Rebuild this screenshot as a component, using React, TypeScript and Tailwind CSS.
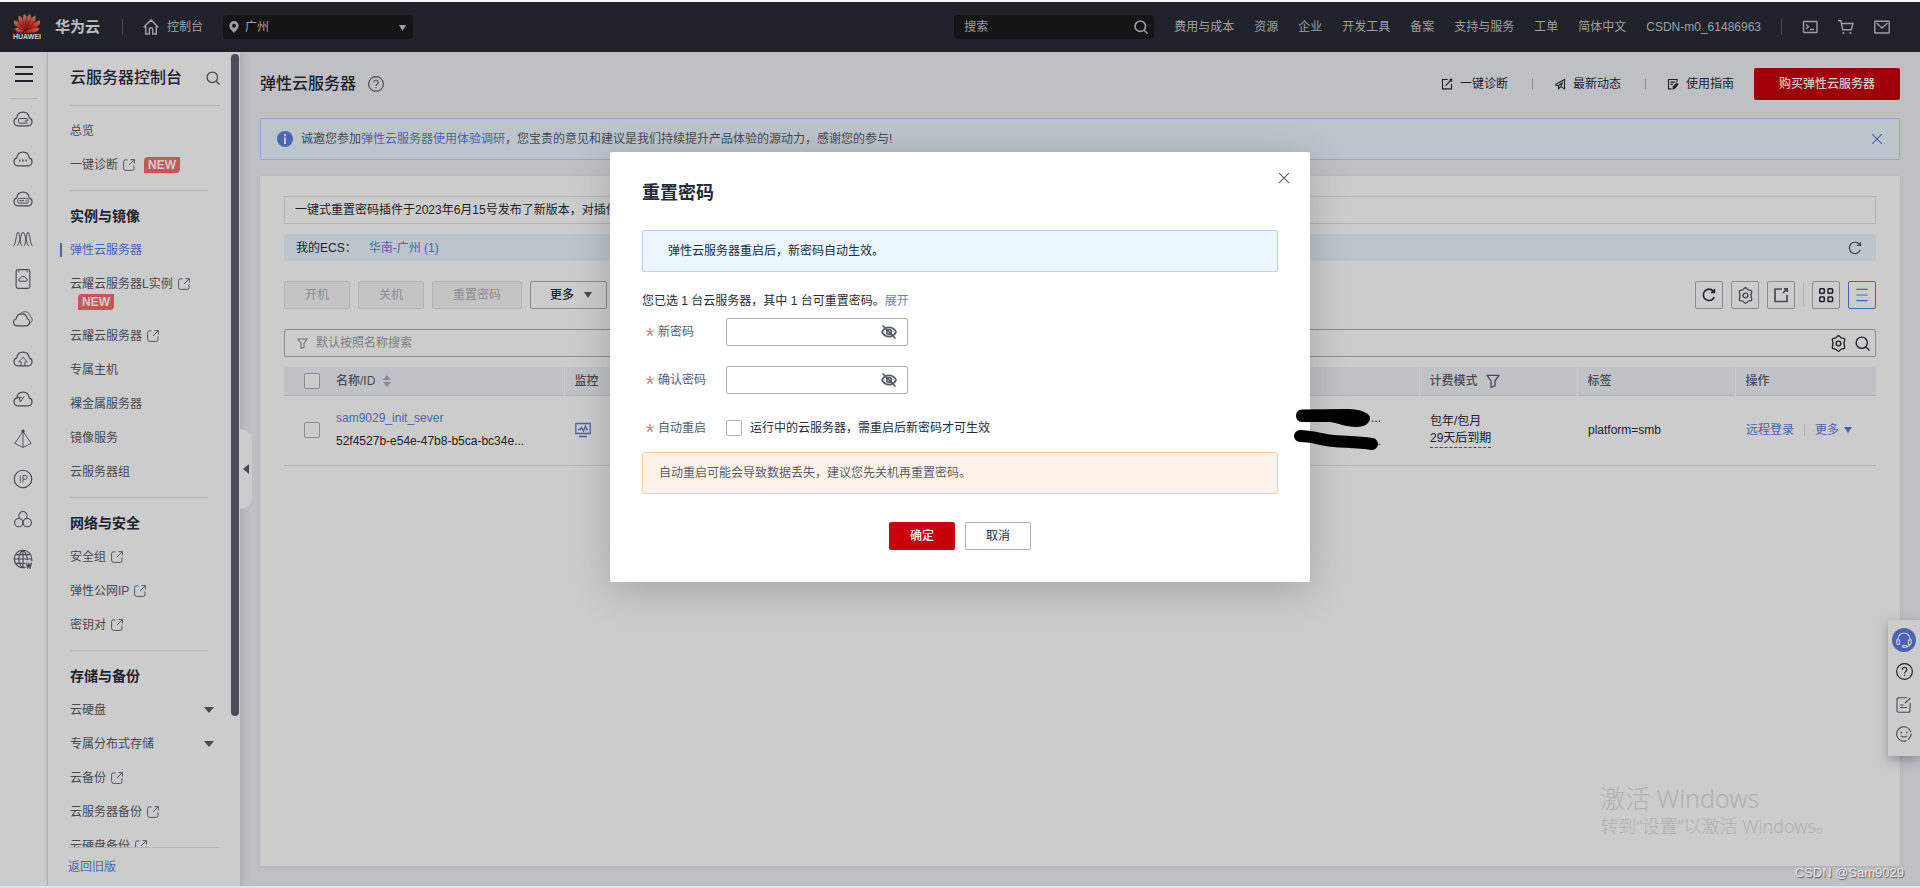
import type { ReactNode } from 'react';

interface IconProps {
  className: string;
  width?: number;
  children: ReactNode;
}

function Icon({ className, width = 1.2, children }: IconProps) {
  return (
    <svg viewBox="0 0 16 16" className={`shrink-0 ${className}`} fill="none" stroke="currentColor" strokeWidth={width} aria-hidden="true">
      {children}
    </svg>
  );
}

const ExternalIcon = () => (
  <Icon className="h-3 w-3" width={1.2}>
    <path d="M6 1.2H3A2.2 2.2 0 0 0 .8 3.4v9a2.8 2.8 0 0 0 2.8 2.8h8.8a2.2 2.2 0 0 0 2.2-2.2V8.5M8 8l7-7M10 .8h5.2V6" />
  </Icon>
);

const SearchIcon = ({ className, width = 1.3 }: { className: string; width?: number }) => (
  <Icon className={className} width={width}>
    <circle cx="7.2" cy="7.2" r="6" />
    <path d="m11.5 11.5 4 4" />
  </Icon>
);

const RefreshIcon = ({ className, width = 1.5 }: { className: string; width?: number }) => (
  <Icon className={className} width={width}>
    <path d="M14 10.4A6.5 6.5 0 1 1 12.8 3.4l1 1.2M14.2 1v4h-4" />
  </Icon>
);

const GearIcon = ({ className }: { className: string }) => (
  <Icon className={className} width={1.3}>
    <path d="M8 .7c1.1 0 1.6 1.4 2.5 1.9 1 .5 2.6.1 3.2 1.1.6 1-.5 2.100-.5 4.300s1.100 3.300.5 4.300c-.6 1-2.200.6-3.200 1.100-.9.5-1.400 1.900-2.500 1.900s-1.600-1.400-2.500-1.900c-1-.5-2.600-.1-3.200-1.100-.6-1 .5-2.100.5-4.300s-1.100-3.300-.5-4.300c.6-1 2.200-.6 3.200-1.100C6.400 2.100 6.900.7 8 .7z" />
    <circle cx="8" cy="8" r="2.200" />
  </Icon>
);

const FilterIcon = ({ className }: { className: string }) => (
  <Icon className={className} width={1.5}>
    <path d="M1.2 1.500h13.600L10.200 8v5.500l-4.400 1.700V8z" />
  </Icon>
);

const CloseIcon = ({ className, width = 1.5 }: { className: string; width?: number }) => (
  <Icon className={className} width={width}>
    <path d="m1.5 1.5 13 13M14.5 1.5l-13 13" />
  </Icon>
);

const HelpIcon = ({ className }: { className: string }) => (
  <Icon className={className} width={1.1}>
    <circle cx="8" cy="8" r="7.4" />
    <path d="M5.800 6.300A2.200 2.200 0 1 1 9.300 8C8.500 8.600 8 8.900 8 9.900M8 11v1.300" />
  </Icon>
);

const CaretDown = ({ className }: { className: string }) => (
  <svg viewBox="0 0 10 6" preserveAspectRatio="none" className={`shrink-0 ${className}`} fill="currentColor" aria-hidden="true">
    <path d="M0 0h10L5 6z" />
  </svg>
);

const EyeOffIcon = () => (
  <Icon className="h-4 w-4" width={1.7}>
    <path d="M1 8c1.600-3 4.200-4.600 7-4.600S13.400 5 15 8c-1.600 3-4.200 4.600-7 4.600S2.600 11 1 8z" />
    <circle cx="8" cy="8" r="2.300" />
    <path d="m1.500 1.500 13 13" />
  </Icon>
);

const CLOUD = 'M3.800 13.500h8.400a3.300 3.300 0 0 0 .8-6.400C12.600 4.200 10.600 2.500 8 2.500S3.400 4.200 3 7.100a3.300 3.300 0 0 0 .8 6.400z';

const RAIL_ICONS: { name: string; shape: ReactNode }[] = [
  { name: '弹性云服务器', shape: <><path d={CLOUD} /><path d="M11.800 11.300H5.500a1.200 1.200 0 0 1-1.200-1.200V8.800a1.200 1.200 0 0 1 1.200-1.200h5a1.200 1.200 0 0 1 1.200 1.200v.8H9.200" strokeWidth=".8" /></> },
  { name: '云耀云服务器', shape: <><path d={CLOUD} /><path d="M4.800 9.200H6M7.400 9.200h1.200M10 9.200h1.200" strokeWidth="1.500" /></> },
  { name: '裸金属服务器', shape: <><path d={CLOUD} /><rect x="3.800" y="7.500" width="8.400" height="3.800" rx="1" strokeWidth=".7" /><path d="M5 9.400h3.800M9.800 9.400h1.200" /></> },
  { name: '弹性伸缩', shape: <path d="M.3 13.500C2.200 13.500 2.600 2.500 4 2.500s1.800 11 3.300 11M3.300 13.500c1.500 0 3.200-11 4.700-11s3.200 11 4.700 11M8.700 13.500c1.500 0 1.900-11 3.300-11s1.800 11 3.700 11" strokeWidth=".8" /> },
  { name: '专属主机', shape: <><rect x="2.500" y=".5" width="11" height="15" rx="1.500" /><path d="M4 2.200h1.200M10.800 2.200H12M5.600 9.800h4.800a1 1 0 0 0 .2-2C10.200 6.700 9.200 6 8 6s-2.200.7-2.600 1.800a1 1 0 0 0 .2 2z" strokeWidth=".8" /></> },
  { name: '云备份', shape: <><path d="M3.300 13.500h7.500a3 3 0 0 0 .7-5.700C11 5.300 9.200 3.900 7 3.900S3 5.300 2.600 7.800a2.900 2.900 0 0 0 .7 5.700z" /><path d="M6 3.700C7 2.700 8.300 2.200 9.700 2.200c2.300 0 3.800 1.500 4.200 3.800a3 3 0 0 1-.2 5.300" strokeWidth=".7" /></> },
  { name: '云迁移', shape: <><path d={CLOUD} /><path d="M6.500 13.500v-3.200H4.600L8 6.500l3.400 3.800H9.500v3.200" strokeWidth=".7" /></> },
  { name: '云监控', shape: <><path d={CLOUD} /><path d="M3 7.100c1.400-.4 3-.3 4-.3M4.800 6l1 4.500L9 5.800" strokeWidth=".8" /></> },
  { name: '负载均衡', shape: <><path d="M8 1.800 1.500 11.500 8 14.800l6.500-3.300zM8 2v12.500" strokeWidth=".7" /><circle cx="8" cy="1.800" r=".9" fill="currentColor" /></> },
  { name: '弹性公网IP', shape: <><circle cx="8" cy="8" r="7" strokeWidth=".9" /><path d="M5.800 5.200v5.600M8 10.800V5.200h1.700a1.500 1.500 0 0 1 0 3.100H8" strokeWidth=".7" /></> },
  { name: '安全组', shape: <><path d="M5.600 7.700a3.300 3.300 0 1 1 4.800 0" strokeWidth=".9" /><circle cx="4.600" cy="10.900" r="3.300" strokeWidth=".9" /><circle cx="11.400" cy="10.900" r="3.300" strokeWidth=".9" /></> },
  { name: '域名', shape: <><path d="M10 14.700A7 7 0 1 1 15 8.500v1.200M8 15c-4.500-3-4.500-11 0-14 2.300 1.800 3.500 4.600 3.500 8M8 1v14M1 8h14M2.200 4.500h11.600M2.200 11.500h7.500" /><path d="m10.700 11 1 4 1-3 1 3 1-4" strokeWidth="1.100" /></> },
];

interface MenuItem {
  label: string;
  external?: boolean;
  isNew?: boolean;
  badgeBelow?: boolean;
  active?: boolean;
  expandable?: boolean;
}

const MENU: { title?: string; items: MenuItem[] }[] = [
  { items: [{ label: '总览' }, { label: '一键诊断', external: true, isNew: true }] },
  {
    title: '实例与镜像',
    items: [
      { label: '弹性云服务器', active: true },
      { label: '云耀云服务器L实例', external: true, isNew: true, badgeBelow: true },
      { label: '云耀云服务器', external: true },
      { label: '专属主机' },
      { label: '裸金属服务器' },
      { label: '镜像服务' },
      { label: '云服务器组' },
    ],
  },
  {
    title: '网络与安全',
    items: [
      { label: '安全组', external: true },
      { label: '弹性公网IP', external: true },
      { label: '密钥对', external: true },
    ],
  },
  {
    title: '存储与备份',
    items: [
      { label: '云硬盘', expandable: true },
      { label: '专属分布式存储', expandable: true },
      { label: '云备份', external: true },
      { label: '云服务器备份', external: true },
      { label: '云硬盘备份', external: true },
    ],
  },
];

const NAV = ['费用与成本', '资源', '企业', '开发工具', '备案', '支持与服务', '工单', '简体中文'];

const PETALS = [-78, -52, -28, -9, 9, 28, 52, 78];

function Logo() {
  return (
    <a href="#" className="flex w-[26px] flex-col items-center text-white">
      <svg viewBox="0 0 26 20" className="h-5 w-[26px]" aria-hidden="true">
        <defs>
          <linearGradient id="petal" x1="0" y1="0" x2="0" y2="1">
            <stop offset="0" stopColor="#f5957c" />
            <stop offset=".5" stopColor="#ea3a28" />
            <stop offset="1" stopColor="#d0101a" />
          </linearGradient>
        </defs>
        {PETALS.map((angle) => (
          <path
            key={angle}
            d="M13 18.500C10.500 13 9.700 7 11 3.500c.6-1.600 1.300-2.500 2-2.800.7.300 1.400 1.200 2 2.800 1.300 3.500.5 9.500-2 15z"
            fill="url(#petal)"
            stroke="#272b33"
            strokeWidth=".5"
            transform={`rotate(${angle} 13 18.500) translate(0 ${Math.abs(angle) > 60 ? 5 : 0})`}
          />
        ))}
      </svg>
      <span className="text-[7px] leading-[8px] font-bold">HUAWEI</span>
    </a>
  );
}

function Header() {
  return (
    <header className="flex h-[50px] shrink-0 items-center bg-[#272b33] pr-[30px] pl-[14px] text-[#c4c6cb]">
      <Logo />
      <a href="#" className="ml-[15px] text-[15px] font-bold text-[#eeeeee]">华为云</a>
      <span className="ml-[22px] h-4 w-px bg-[#5a5d64]" />
      <a href="#" className="ml-5 flex items-center gap-2">
        <Icon className="h-4 w-4" width={1.5}>
          <path d="M.7 8.200 8 1l7.300 7.200M2.700 7v8h3.600v-4.500a1.700 1.700 0 0 1 3.400 0V15h3.600V7" />
        </Icon>
        控制台
      </a>
      <div className="relative ml-5 w-[190px]">
        <svg viewBox="0 0 10 12" className="absolute top-[6px] left-[6px] h-3 w-[10px]" fill="currentColor" aria-hidden="true">
          <path fillRule="evenodd" d="M5 0a4.700 4.700 0 0 0-4.700 4.700C.3 7.600 3 9.500 5 12c2-2.500 4.700-4.400 4.700-7.300A4.700 4.700 0 0 0 5 0zm0 6.700a2 2 0 1 1 0-4 2 2 0 0 1 0 4z" />
        </svg>
        <select aria-label="区域" className="h-6 w-full appearance-none rounded-sm bg-[#191919] pl-[22px]">
          <option>广州</option>
        </select>
        <CaretDown className="pointer-events-none absolute top-[10px] right-[7px] h-[6px] w-[7px]" />
      </div>
      <div className="ml-auto flex h-6 w-[200px] items-center rounded-sm bg-[#191919] pr-[6px] pl-[10px]">
        <input aria-label="搜索" placeholder="搜索" className="min-w-0 flex-1 placeholder:text-[#c4c6cb]" />
        <SearchIcon className="h-[14px] w-[14px]" width={1.8} />
      </div>
      <nav className="ml-5 flex items-center gap-5">
        {NAV.map((item) => (
          <a key={item} href="#">{item}</a>
        ))}
        <a href="#">CSDN-m0_61486963</a>
      </nav>
      <span className="ml-5 h-4 w-px bg-[#5a5d64]" />
      <div className="ml-5 flex items-center gap-5">
        <button aria-label="CloudShell">
          <Icon className="h-4 w-4" width={1.4}>
            <rect x="1.500" y="2.500" width="13.500" height="11" rx=".5" />
            <path d="m4 5.500 2.500 2.300L4 10M8 10.500h4" />
          </Icon>
        </button>
        <button aria-label="购物车">
          <Icon className="h-4 w-4" width={1.4}>
            <path d="M0 1.800h2.800l2 9h8.400L15 4.500H3.500" />
            <path d="M4.500 13.800h1.800M11.500 13.800h1.800" strokeWidth="1.800" />
          </Icon>
        </button>
        <button aria-label="消息">
          <Icon className="h-4 w-4" width={1.4}>
            <rect x=".8" y="2.200" width="14.400" height="11.800" rx=".5" />
            <path d="m2.500 4 5.500 5 5.500-5" />
          </Icon>
        </button>
      </div>
    </header>
  );
}

function NewBadge() {
  return (
    <span className="flex h-4 w-9 items-center justify-center rounded-tl-[4px] rounded-br-[4px] bg-[#f66f6a] font-bold text-white">NEW</span>
  );
}

function Sidebar() {
  return (
    <>
      <div className="flex w-12 shrink-0 flex-col items-center overflow-hidden border-r border-[#dfe1e6] bg-white text-[#575d6c]">
        <button aria-label="菜单" className="mt-[14px] flex h-4 w-[18px] flex-col justify-between">
          <span className="h-[2px] w-full bg-[#252b3a]" />
          <span className="h-[2px] w-full bg-[#252b3a]" />
          <span className="h-[2px] w-full bg-[#252b3a]" />
        </button>
        <span className="mt-4 h-px w-[27px] bg-[#dfe1e6]" />
        {RAIL_ICONS.map(({ name, shape }) => (
          <a key={name} href="#" aria-label={name} className="flex h-10 items-center pr-px">
            <Icon className="h-5 w-5" width={0.9}>{shape}</Icon>
          </a>
        ))}
      </div>
      <aside className="relative z-10 flex w-48 shrink-0 bg-white shadow-[2px_0_8px_rgba(37,43,58,0.15)]">
        <div className="flex min-w-0 flex-1 flex-col pl-[22px]">
          <div className="mr-[11px] flex h-[54px] shrink-0 items-center justify-between border-b border-[#dfe1e6] pb-[2px] text-[#252b3a]">
            <h1 className="text-base font-medium">云服务器控制台</h1>
            <button aria-label="搜索菜单" className="text-[#575d6c]"><SearchIcon className="h-[14px] w-[14px]" width={1.5} /></button>
          </div>
          <nav className="-ml-[22px] min-h-0 flex-1 overflow-hidden pt-2 pl-[22px] text-[#575d6c]">
            {MENU.map((group, i) => (
              <section key={i} className={i > 0 ? 'mt-2 mr-[23px] border-t border-[#dfe1e6] pt-2' : ''}>
                {group.title && <h2 className="flex h-[34px] items-center text-sm font-bold text-[#252b3a]">{group.title}</h2>}
                {group.items.map((item) => (
                  <div key={item.label}>
                    <a href="#" className={`relative flex h-[34px] items-center gap-[5px] whitespace-nowrap ${item.active ? 'text-[#5e7ce0]' : ''}`}>
                      {item.active && <span className="absolute -left-[10px] h-[14px] w-[2px] bg-[#5e7ce0]" />}
                      {item.label}
                      {item.external && <ExternalIcon />}
                      {item.isNew && !item.badgeBelow && <span className="ml-1"><NewBadge /></span>}
                      {item.expandable && <CaretDown className="absolute -right-[6px] h-[6px] w-[10px]" />}
                    </a>
                    {item.badgeBelow && <div className="-mt-[7px] flex h-[25px] pl-2"><NewBadge /></div>}
                  </div>
                ))}
              </section>
            ))}
          </nav>
          <div className="mr-3 -ml-[2px] flex h-[39px] shrink-0 items-center border-t border-[#dfe1e6]">
            <a href="#" className="text-[#5e7ce0]">返回旧版</a>
          </div>
        </div>
        <div className="mt-[2px] mr-px h-[662px] w-2 rounded-full bg-[#5d6070]" />
        <button aria-label="收起" className="absolute top-[377px] left-full flex h-20 w-3 items-center justify-center rounded-r-xl bg-white text-[#575d6c]">
          <CaretDown className="h-[6px] w-[10px] rotate-90" />
        </button>
      </aside>
    </>
  );
}

const QUICK_LINKS: { label: string; icon: ReactNode }[] = [
  { label: '一键诊断', icon: <><path d="M9 2H2v12.500h12V8M6 10.500l7-7.500" /><path d="M11.500 2H14v3" strokeWidth="2" /></> },
  { label: '最新动态', icon: <path d="M1.500 9 14 2v12.500l-5-3-3 2.800V10.500l5.500-4.500M1.500 9l4.500 1.500M9 11.500l2.500-5.500" /> },
  { label: '使用指南', icon: <><path d="M13.500 5V2H2v12.500h4M4.500 5.500h7M4.500 8.500h3.500" /><path d="m8 14.500.5-3L13 7l1.500 1.500-4 5z" fill="currentColor" /></> },
];

const BTN = 'flex h-7 items-center justify-center rounded-xs border';

function Toolbar() {
  return (
    <div className="mt-5 flex items-center gap-2">
      {['开机', '关机', '重置密码'].map((label) => (
        <button key={label} disabled className={`${BTN} border-[#dfe1e6] bg-[#f5f5f6] px-5 text-[#adb0b8]`}>{label}</button>
      ))}
      <button className={`${BTN} gap-[10px] border-[#adb0b8] pr-[14px] pl-[19px] font-medium`}>
        更多
        <CaretDown className="h-[6px] w-2 text-[#575d6c]" />
      </button>
      <div className="ml-auto flex items-center gap-2">
        <button aria-label="刷新" className={`${BTN} w-7 border-[#adb0b8]`}><RefreshIcon className="h-[14px] w-[14px]" width={1.8} /></button>
        <button aria-label="设置" className={`${BTN} w-7 border-[#adb0b8] text-[#575d6c]`}><GearIcon className="h-[17px] w-[17px]" /></button>
        <button aria-label="导出" className={`${BTN} w-7 border-[#adb0b8] text-[#575d6c]`}>
          <Icon className="h-4 w-4" width={1.7}><path d="M9 2H2v12.500h12V8M10 6l4-4M11 1.800h3.200V5" /></Icon>
        </button>
        <span className="h-6 w-px bg-[#dfe1e6]" />
        <button aria-label="卡片" className={`${BTN} w-7 border-[#adb0b8]`}>
          <Icon className="h-4 w-4" width={1.5}>
            <rect x="1.700" y="1.700" width="4.600" height="4.600" rx=".8" />
            <rect x="10" y="1.700" width="4.600" height="4.600" rx=".8" />
            <rect x="1.700" y="10" width="4.600" height="4.600" rx=".8" />
            <rect x="10" y="10" width="4.600" height="4.600" rx=".8" />
          </Icon>
        </button>
        <button aria-label="列表" className={`${BTN} w-7 border-[#5e7ce0] text-[#5e7ce0]`}>
          <Icon className="h-[14px] w-[14px]" width={1.3}><path d="M1.500 1.500h13M1.500 8h13M1.500 14.500h13" /></Icon>
        </button>
      </div>
    </div>
  );
}

function ServerTable() {
  const th = 'border-l border-white pl-[10px] text-left font-medium';
  return (
    <table className="mt-[10px] w-full table-fixed">
      <colgroup>
        <col className="w-[42px]" />
        <col className="w-[238px]" />
        <col className="w-[100px]" />
        <col />
        <col className="w-[158px]" />
        <col className="w-[158px]" />
        <col className="w-[141px]" />
      </colgroup>
      <thead>
        <tr className="h-7 border-b border-[#dfe1e6] bg-[#f2f3f9] text-[#575d6c]">
          <th className="pl-5 text-left">
            <input type="checkbox" aria-label="全选" className="block h-4 w-4 appearance-none rounded-xs border border-[#adb0b8] bg-white" />
          </th>
          <th className="pl-[10px] text-left font-medium">
            <span className="flex items-center gap-2">
              名称/ID
              <svg viewBox="0 0 8 12" className="h-3 w-2" fill="#adb0b8" aria-hidden="true"><path d="M0 5h8L4 0zM0 7h8l-4 5z" /></svg>
            </span>
          </th>
          <th className={th}>监控</th>
          <th />
          <th className={th}>
            <span className="flex items-center gap-2">计费模式<FilterIcon className="h-[14px] w-[14px]" /></span>
          </th>
          <th className={th}>标签</th>
          <th className={th}>操作</th>
        </tr>
      </thead>
      <tbody>
        <tr className="h-[70px] border-b border-[#dfe1e6]">
          <td className="pl-5">
            <input type="checkbox" aria-label="选择 sam9029_init_sever" className="block h-4 w-4 appearance-none rounded-xs border border-[#adb0b8]" />
          </td>
          <td className="pl-[10px] leading-[23px]">
            <a href="#" className="block text-[#5e7ce0]">sam9029_init_sever</a>
            <span className="block">52f4527b-e54e-47b8-b5ca-bc34e...</span>
          </td>
          <td className="pl-[11px] text-[#5e7ce0]">
            <a href="#" aria-label="监控" className="block">
              <Icon className="h-4 w-4" width={1.3}><path d="M.8 1.500h14.400v10H.8zM4 14.500h8M3 7.500h2l1.500-2 2 3.500 2-5 1 3.500H13" /></Icon>
            </a>
          </td>
          <td className="pr-[38px] text-right leading-[23px]">
            <span className="block">...</span>
            <span className="block">...</span>
          </td>
          <td className="pl-[11px]">
            <span className="block leading-[18px]">包年/包月</span>
            <span className="inline-block border-b border-dashed border-[#575d6c] leading-[17px]">29天后到期</span>
          </td>
          <td className="pl-[11px]">platform=smb</td>
          <td className="pl-[11px] text-[#5e7ce0]">
            <div className="flex items-center gap-[10px]">
              <a href="#">远程登录</a>
              <span className="h-3 w-px bg-[#dfe1e6]" />
              <button className="flex items-center gap-[5px]">更多<CaretDown className="h-[6px] w-2" /></button>
            </div>
          </td>
        </tr>
      </tbody>
    </table>
  );
}

function FloatPanel() {
  return (
    <div className="absolute right-0 bottom-[130px] flex h-[136px] w-8 flex-col items-center bg-white pt-2 text-[#575d6c] shadow-[0_4px_12px_rgba(37,43,58,0.35)]">
      <button aria-label="客服" className="flex h-6 w-6 items-center justify-center rounded-full bg-[#5e7ce0] text-white">
        <Icon className="h-4 w-4" width={1.2}>
          <path d="M2 8V7a6 6 0 0 1 12 0v1M.8 8h2.700v4.500H2.300A1.500 1.500 0 0 1 .8 11zM15.200 8h-2.700v4.500h1.200a1.500 1.500 0 0 0 1.500-1.500zM13.500 12.500c0 1.500-1 2-3 2.200" />
          <rect x="6.500" y="13.500" width="4" height="1.800" rx=".9" />
        </Icon>
      </button>
      <button aria-label="帮助" className="mt-[11px] text-[#252b3a]"><HelpIcon className="block h-[17px] w-[17px]" /></button>
      <button aria-label="反馈" className="mt-[17px]">
        <Icon className="block h-4 w-4" width={1.1}><path d="M11 .8H2.500A1.500 1.500 0 0 0 1 2.300v11.400a1.500 1.500 0 0 0 1.500 1.500h10a1.500 1.500 0 0 0 1.500-1.500V6M9 6l5.500-5M4 8h3.500M4 10.500h7" /></Icon>
      </button>
      <button aria-label="评价" className="mt-[13px]">
        <Icon className="block h-4 w-4" width={1.1}>
          <path d="M10.500 14.700A7.200 7.200 0 1 1 14.800 6M15.300 7.500c0 2.500-1.300 4-3.300 6.500M5 9.800c1.500 1.600 4.500 1.600 6 0" />
          <path d="M4.500 6.500H6M10 6.500h1.500" strokeWidth="1.500" />
        </Icon>
      </button>
    </div>
  );
}

function MainContent() {
  return (
    <main className="flex min-w-0 flex-1 flex-col bg-[#eef0f5] px-5 pb-5">
      <div className="flex h-16 shrink-0 items-center">
        <h2 className="text-base font-medium">弹性云服务器</h2>
        <button aria-label="帮助" className="ml-3 text-[#575d6c]"><HelpIcon className="h-4 w-4" /></button>
        <div className="ml-auto flex items-center">
          {QUICK_LINKS.map(({ label, icon }, i) => (
            <div key={label} className="flex items-center">
              {i > 0 && <span className="mr-[21px] ml-6 h-[10px] w-px bg-[#adb0b8]" />}
              <a href="#" className="flex items-center gap-[7px]">
                <Icon className="h-3 w-3" width={1.5}>{icon}</Icon>
                {label}
              </a>
            </div>
          ))}
        </div>
        <button className="ml-5 h-8 rounded-xs bg-[#c7000b] px-[25px] font-medium text-white">购买弹性云服务器</button>
      </div>
      <div className="mt-[2px] flex h-[42px] shrink-0 items-center rounded-xs border border-[#beccfa] bg-[#ebf6ff] px-4">
        <svg viewBox="0 0 16 16" className="h-4 w-4" aria-hidden="true">
          <circle cx="8" cy="8" r="8" fill="#5e7ce0" />
          <path d="M8 3v2.200M8 6.500V13" stroke="#fff" strokeWidth="2" />
        </svg>
        <p className="ml-2 text-[#575d6c]">
          诚邀您参加<a href="#" className="text-[#5e7ce0]">弹性云服务器使用体验调研</a>，您宝贵的意见和建议是我们持续提升产品体验的源动力，感谢您的参与!
        </p>
        <button aria-label="关闭提示" className="ml-auto text-[#5e7ce0]"><CloseIcon className="h-3 w-3" width={1.7} /></button>
      </div>
      <section className="mt-4 min-h-0 flex-1 bg-white px-6 pt-5 shadow-[0_1px_4px_rgba(37,43,58,0.1)]">
        <p className="flex h-7 items-center border border-[#dfe1e6] px-[10px]">一键式重置密码插件于2023年6月15号发布了新版本，对插件</p>
        <div className="mt-[10px] flex h-[27px] items-center rounded-xs bg-[#ebf6ff] pr-[14px] pl-3">
          我的ECS：
          <a href="#" className="ml-3 text-[#5e7ce0]">华南-广州 (1)</a>
          <button aria-label="刷新" className="ml-auto text-[#575d6c]"><RefreshIcon className="h-[14px] w-[14px]" /></button>
        </div>
        <Toolbar />
        <div className="mt-5 flex h-7 items-center gap-2 rounded-xs border border-[#adb0b8] pr-[5px] pl-3">
          <FilterIcon className="h-[11px] w-[11px] text-[#8a8e99]" />
          <input aria-label="搜索服务器" placeholder="默认按照名称搜索" className="min-w-0 flex-1 placeholder:text-[#9b9fa8]" />
          <GearIcon className="h-[17px] w-[17px]" />
          <SearchIcon className="h-[15px] w-[15px]" width={1.5} />
        </div>
        <ServerTable />
      </section>
    </main>
  );
}

function FieldLabel({ htmlFor, children }: { htmlFor: string; children: ReactNode }) {
  return (
    <label htmlFor={htmlFor} className="flex h-7 w-[84px] items-center gap-1 pl-1 text-[#575d6c]">
      <svg viewBox="0 0 8 8" className="h-2 w-2" stroke="#f66f6a" strokeWidth="1.2" aria-hidden="true"><path d="M4 0v4M0 3l4 1 4-1M1.500 8 4 4l2.500 4" fill="none" /></svg>
      {children}
    </label>
  );
}

function PasswordField({ id, label }: { id: string; label: string }) {
  return (
    <div className="flex h-12 items-start">
      <FieldLabel htmlFor={id}>{label}</FieldLabel>
      <div className="flex h-7 w-[182px] items-center rounded-xs border border-[#adb0b8] pr-[10px] pl-2 text-[#575d6c]">
        <input id={id} type="password" className="min-w-0 flex-1" />
        <button aria-label="显示密码"><EyeOffIcon /></button>
      </div>
    </div>
  );
}

function ResetPasswordDialog() {
  return (
    <div role="dialog" aria-labelledby="dialog-title" className="relative w-[700px] rounded-xs bg-white px-8 pt-7 pb-8 shadow-[0_8px_40px_rgba(0,0,0,0.2)]">
      <button aria-label="关闭" className="absolute top-5 right-5 text-[#575d6c]"><CloseIcon className="block h-3 w-3" /></button>
      <h2 id="dialog-title" className="text-lg leading-[26px] font-bold">重置密码</h2>
      <p className="mt-6 flex h-[42px] items-center rounded-xs border border-[#beccfa] bg-[#ebf6ff] px-[25px]">弹性云服务器重启后，新密码自动生效。</p>
      <p className="mt-5 leading-[18px]">
        您已选 1 台云服务器，其中 1 台可重置密码。<a href="#" className="text-[#5e7ce0]">展开</a>
      </p>
      <div className="mt-2">
        <PasswordField id="password" label="新密码" />
        <PasswordField id="confirm" label="确认密码" />
        <div className="flex h-[38px] items-start">
          <FieldLabel htmlFor="restart">自动重启</FieldLabel>
          <label className="flex h-7 items-center gap-2">
            <input id="restart" type="checkbox" className="h-4 w-4 appearance-none rounded-xs border border-[#adb0b8]" />
            运行中的云服务器，需重启后新密码才可生效
          </label>
        </div>
      </div>
      <p className="flex h-[42px] items-center rounded-xs border border-[#ffd0a6] bg-[#fff3e8] px-4 text-[#575d6c]">自动重启可能会导致数据丢失，建议您先关机再重置密码。</p>
      <div className="mt-7 flex justify-center gap-[10px]">
        <button className={`${BTN} border-[#c7000b] bg-[#c7000b] px-5 font-medium text-white`}>确定</button>
        <button className={`${BTN} border-[#adb0b8] px-5`}>取消</button>
      </div>
    </div>
  );
}

export default function App() {
  return (
    <div className='flex h-screen flex-col overflow-hidden border-b-2 border-[#d9e4ee] bg-[#f4f4f4] pt-[2px] font-["Liberation_Sans","Noto_Sans_CJK_SC",sans-serif] text-xs text-[#252b3a]'>
      <div className="relative flex min-h-0 flex-1 flex-col">
        <Header />
        <div className="flex min-h-0 flex-1">
          <Sidebar />
          <MainContent />
        </div>
        <FloatPanel />

        <div className="absolute inset-0 z-20 flex items-start justify-center bg-black/20 pt-[150px]">
          <ResetPasswordDialog />
        </div>

        {/* redacted address */}
        <svg viewBox="0 0 88 42" className="absolute top-[407px] right-[540px] z-30 h-[42px] w-[88px]" fill="none" stroke="#000" strokeLinecap="round" aria-hidden="true">
          <path d="M10 .5C2 .5 2 13 10 13h28c8 1 16 5 26 5 9 0 14-4 14-9S68 0 56 0z" fill="#000" stroke="none" />
          <path d="M8 27c12 0 22 4 34 5s24 1 38 3" strokeWidth="12" />
        </svg>

        <div className='absolute right-[86px] bottom-12 z-30 font-["Noto_Sans","Noto_Sans_CJK_SC",sans-serif] text-[#b0b0b0]'>
          <p className="text-[25px] leading-8 font-light">激活 Windows</p>
          <p className="text-lg leading-6 font-light">转到“设置”以激活 Windows。</p>
        </div>
        <p className="absolute right-4 bottom-1 z-30 text-[13px] leading-[18px] text-[#e8e8e8] [text-shadow:1px_1px_1px_#555]">CSDN @Sam9029</p>
      </div>
    </div>
  );
}
